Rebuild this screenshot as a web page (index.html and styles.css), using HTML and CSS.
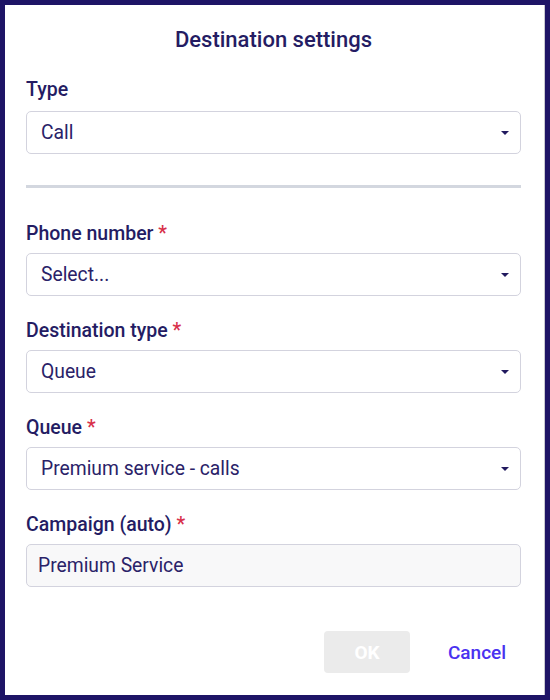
FILE: index.html
```html
<!DOCTYPE html>
<html>
<head>
<meta charset="utf-8">
<link rel="stylesheet" href="styles.css">
</head>
<body>
<div class="dialog">
  <h1 class="title">Destination settings</h1>
  <div class="field field-type">
    <label class="label">Type</label>
    <div class="select"><span>Call</span><span class="caret"></span></div>
  </div>
  <hr class="divider">
  <div class="fields">
    <div class="field">
      <label class="label">Phone number <span class="req">*</span></label>
      <div class="select"><span>Select...</span><span class="caret"></span></div>
    </div>
    <div class="field">
      <label class="label">Destination type <span class="req">*</span></label>
      <div class="select"><span>Queue</span><span class="caret"></span></div>
    </div>
    <div class="field">
      <label class="label">Queue <span class="req">*</span></label>
      <div class="select"><span>Premium service - calls</span><span class="caret"></span></div>
    </div>
    <div class="field">
      <label class="label">Campaign (auto) <span class="req">*</span></label>
      <div class="input-disabled">Premium Service</div>
    </div>
  </div>
  <div class="actions">
    <button class="btn btn-ok">OK</button>
    <button class="btn btn-cancel">Cancel</button>
  </div>
</div>
</body>
</html>
```

FILE: styles.css
```css
html, body {
  margin: 0;
  padding: 0;
}
body {
  background: #1e1466;
  width: 550px;
  height: 700px;
  padding: 5px;
  box-sizing: border-box;
  font-family: Roboto, "Liberation Sans", sans-serif;
  color: #241c63;
}
.dialog {
  background: #fff;
  width: 540px;
  height: 690px;
  box-sizing: border-box;
  padding: 22px 23px 0 21px;
  border-right: 1px solid #c8c8d0;
}
.title {
  margin: 0 0 26px;
  font-size: 22px;
  line-height: 26px;
  font-weight: 500;
  text-align: center;
  color: #241c63;
}
.field {
  display: flex;
  flex-direction: column;
}
.label {
  font-size: 19.5px;
  line-height: 22px;
  font-weight: 500;
  margin-bottom: 8px;
}
.field-type .label {
  margin-bottom: 10px;
}
.req {
  color: #d8304a;
}
.select, .input-disabled {
  height: 43px;
  box-sizing: border-box;
  border: 1px solid #d3d3de;
  border-radius: 5px;
  display: flex;
  align-items: center;
  justify-content: space-between;
  padding: 0 11px 0 14px;
  font-size: 19.3px;
  color: #2a2268;
}
.input-disabled {
  background: #f8f8f9;
  padding-left: 11px;
}
.caret {
  width: 0;
  height: 0;
  border-left: 4px solid transparent;
  border-right: 4px solid transparent;
  border-top: 4px solid #221a5f;
}
.divider {
  border: 0;
  height: 3px;
  background: #d3d7df;
  margin: 31px 0 35px;
}
.fields {
  display: flex;
  flex-direction: column;
  gap: 24px;
}
.actions {
  display: flex;
  justify-content: flex-end;
  gap: 24px;
  margin-top: 44px;
}
.btn {
  width: 86px;
  height: 42px;
  border: 0;
  border-radius: 4px;
  font-family: Roboto, "Liberation Sans", sans-serif;
  font-size: 19px;
  font-weight: 500;
  background: transparent;
  padding: 0;
}
.btn-ok {
  background: #ebebeb;
  color: #fff;
  font-weight: 700;
}
.btn-cancel {
  color: #4a32f0;
  margin-right: 1px;
}
```
